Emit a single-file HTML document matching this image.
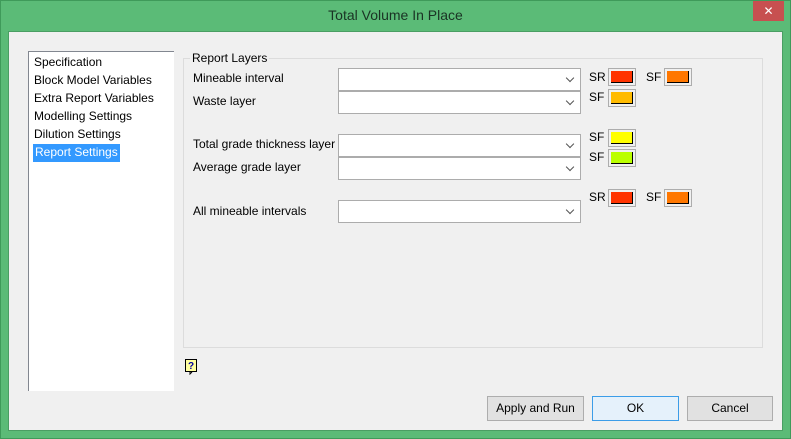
<!DOCTYPE html>
<html><head><style>
*{box-sizing:border-box;margin:0;padding:0}
body{width:791px;height:439px;background:#5bbb77;position:relative;overflow:hidden;font-family:"Liberation Sans",sans-serif;font-size:12px;color:#000}
.frame{position:absolute;left:0;top:0;width:791px;height:439px;border:1px solid #3f9a5a}
.title{position:absolute;left:0;top:7px;width:791px;text-align:center;font-size:14px;color:#1a3324}
.close{position:absolute;left:753px;top:1px;width:31px;height:20px;background:#c75050;color:#fff;text-align:center;font-size:12px;line-height:20px}
.client{position:absolute;left:8px;top:31px;width:775px;height:400px;background:#f0f0f0;border:1px solid #4a9e63}
.a{position:absolute}
.list{left:28px;top:51px;width:146px;height:340px;background:#fff;border:1px solid #828790;border-right:none;border-bottom:none}
.list div{position:absolute;left:5px;font-size:12px;white-space:nowrap}
.grp{left:183px;top:58px;width:580px;height:290px;border:1px solid #dcdcdc}
.lbl{position:absolute;font-size:12px;white-space:nowrap}
.cb{position:absolute;left:338px;width:243px;height:23px;background:#fff;border:1px solid #acacac}
.cb:after{content:"";position:absolute;right:7px;top:6px;width:5px;height:5px;border-right:1.5px solid #555;border-bottom:1.5px solid #555;transform:rotate(45deg)}
.sw{position:absolute;width:28px;height:18px;border:1px solid #adadad;padding:2px}
.sw i{display:block;width:100%;height:100%;border-right:1px solid #000;border-bottom:1px solid #000}
.btn{position:absolute;top:396px;height:25px;background:#e1e1e1;border:1px solid #adadad;text-align:center;line-height:23px;font-size:12px}
</style></head><body>
<div class="frame"></div>
<div class="title">Total Volume In Place</div>
<div class="close">✕</div>
<div class="client"></div>
<div class="a list">
<div style="top:3px">Specification</div>
<div style="top:21px">Block Model Variables</div>
<div style="top:39px">Extra Report Variables</div>
<div style="top:57px">Modelling Settings</div>
<div style="top:75px">Dilution Settings</div>
<div style="top:92px;left:4px;background:#3399ff;color:#fff;padding:1px 2px;height:18px">Report Settings</div>
</div>
<div class="a grp"></div>
<div class="lbl" style="left:190px;top:51px;background:#f0f0f0;padding:0 2px">Report Layers</div>
<div class="lbl" style="left:193px;top:71px">Mineable interval</div>
<div class="lbl" style="left:193px;top:94px">Waste layer</div>
<div class="lbl" style="left:193px;top:137px">Total grade thickness layer</div>
<div class="lbl" style="left:193px;top:160px">Average grade layer</div>
<div class="lbl" style="left:193px;top:204px">All mineable intervals</div>
<div class="cb" style="top:68px"></div>
<div class="cb" style="top:91px"></div>
<div class="cb" style="top:134px"></div>
<div class="cb" style="top:157px"></div>
<div class="cb" style="top:200px"></div>
<div class="lbl" style="left:589px;top:70px">SR</div><div class="sw" style="left:608px;top:68px"><i style="background:#ff3300"></i></div>
<div class="lbl" style="left:646px;top:70px">SF</div><div class="sw" style="left:664px;top:68px"><i style="background:#ff7700"></i></div>
<div class="lbl" style="left:589px;top:90px">SF</div><div class="sw" style="left:608px;top:89px"><i style="background:#ffbb00"></i></div>
<div class="lbl" style="left:589px;top:130px">SF</div><div class="sw" style="left:608px;top:129px"><i style="background:#ffff00"></i></div>
<div class="lbl" style="left:589px;top:150px">SF</div><div class="sw" style="left:608px;top:149px"><i style="background:#bbff00"></i></div>
<div class="lbl" style="left:589px;top:190px">SR</div><div class="sw" style="left:608px;top:189px"><i style="background:#ff3300"></i></div>
<div class="lbl" style="left:646px;top:190px">SF</div><div class="sw" style="left:664px;top:189px"><i style="background:#ff7700"></i></div>
<svg class="a" style="left:185px;top:359px" width="14" height="16"><rect x="0.5" y="0.5" width="11" height="12" fill="#ffffa0" stroke="#000"/><path d="M5 13v2l2-2" fill="none" stroke="#000"/><text x="3" y="10" font-size="10" font-weight="bold" fill="#0000a0" font-family="Liberation Sans">?</text></svg>
<div class="btn" style="left:487px;width:97px">Apply and Run</div>
<div class="btn" style="left:592px;width:87px;border-color:#3c9de8;background:#e5f1fb">OK</div>
<div class="btn" style="left:687px;width:86px">Cancel</div>
</body></html>
